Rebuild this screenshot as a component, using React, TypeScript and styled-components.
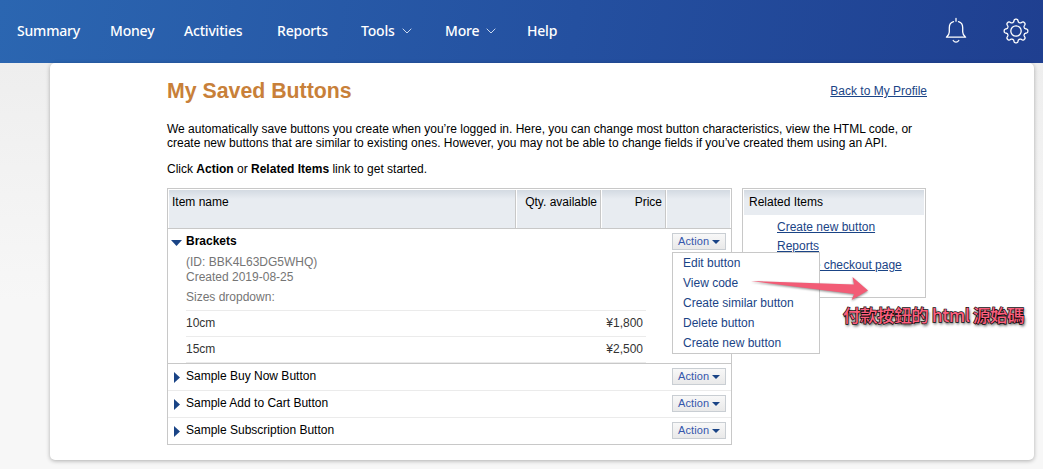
import React from "react";
import styled, { createGlobalStyle } from "styled-components";

const GlobalStyle = createGlobalStyle`
  * { box-sizing: border-box; }
  html { height: 100%; }
  body {
    margin: 0;
    height: 469px;
    overflow: hidden;
    background: linear-gradient(#eeeeee 63px, #f7f7f7 300px);
    font: 12px/14px "Liberation Sans", Arial, sans-serif;
    color: #000;
  }
  h1, p, ul { margin: 0; padding: 0; }
  ul { list-style: none; }
`;

const Header = styled.header`
  display: flex;
  align-items: center;
  justify-content: space-between;
  height: 63px;
  padding: 0 14px 2px 17px;
  background: linear-gradient(100deg, #2b66b1 0%, #2450a0 55%, #1f3f90 100%);
`;
const Nav = styled.nav`
  display: flex;
`;
const NavItem = styled.a<{ $slot: number }>`
  display: flex;
  align-items: center;
  width: ${(p) => p.$slot}px;
  color: #fff;
  font: 500 14px/20px "Noto Sans", sans-serif;
  letter-spacing: -0.2px;
  white-space: nowrap;
  svg { margin: 1px 0 0 7px; }
`;
const Tools = styled.div`
  display: flex;
  align-items: center;
  gap: 36px;
`;

const Panel = styled.main`
  width: 984px;
  height: 397px;
  margin-left: 50px;
  padding: 15px 107px 0 117px;
  background: #fff;
  border-radius: 5px;
  box-shadow: 0 1px 4px rgba(0, 0, 0, 0.3);
`;
const TitleRow = styled.div`
  display: flex;
  justify-content: space-between;
  height: 44px;
`;
const Title = styled.h1`
  color: #c88039;
  font-size: 21.3px;
  line-height: 26px;
`;
const Link = styled.a`
  color: #1a4486;
  text-decoration: underline;
  white-space: nowrap;
`;
const BackLink = styled(Link)`
  margin-top: 6px;
`;
const Intro = styled.p`
  margin-bottom: 12px;
  white-space: nowrap;
`;
const Columns = styled.div`
  display: flex;
  align-items: flex-start;
  gap: 10px;
`;

const Table = styled.section`
  width: 565px;
  border: 1px solid #c8c8c8;
`;
const HeadRow = styled.div`
  display: grid;
  grid-template-columns: 348px 85px 65px 65px;
  height: 40px;
  border-bottom: 1px solid #c8c8c8;
`;
const HeadCell = styled.div<{ $right?: boolean }>`
  padding: 5px 4px 0 3px;
  border: solid #fff;
  border-width: 1px 0 0 1px;
  text-align: ${(p) => (p.$right ? "right" : "left")};
  background: linear-gradient(#d3dae2, #e8ecf1 9px) padding-box;
  box-shadow: inset -1px 0 #c8c8c8;
  white-space: nowrap;
  &:last-child { border-right-width: 1px; box-shadow: none; }
`;
const Row = styled.div<{ $open?: boolean; $last?: boolean }>`
  position: relative;
  display: flex;
  justify-content: space-between;
  height: ${(p) => (p.$open ? 135 : p.$last ? 26 : 27)}px;
  padding: ${(p) => (p.$open ? "5px 5px 0" : "4px 5px 0")};
  border-bottom: ${(p) => (p.$last ? 0 : 1)}px solid ${(p) => (p.$open ? "#c8c8c8" : "#ebebeb")};
`;
const Name = styled.div<{ $bold?: boolean }>`
  display: flex;
  height: 14px;
  font-weight: ${(p) => (p.$bold ? 700 : 400)};
  margin-top: ${(p) => (p.$bold ? 0 : 1)}px;
`;
const Marker = styled.span<{ $down?: boolean }>`
  width: 13px;
  padding-top: ${(p) => (p.$down ? 6 : 3)}px;
  padding-left: ${(p) => (p.$down ? 0 : 1)}px;
  margin-left: ${(p) => (p.$down ? -2 : 0)}px;
  margin-right: ${(p) => (p.$down ? 2 : 0)}px;
  line-height: 0;
`;
const Meta = styled.div`
  margin: 7px 0 0 13px;
  width: 460px;
  color: #757575;
  line-height: 15px;
`;
const Sizes = styled.p`
  margin-top: 5px;
  height: 20px;
`;
const Option = styled.div`
  display: flex;
  justify-content: space-between;
  height: 26px;
  padding: 5px 3px 0 0;
  border-top: 1px solid #ebebeb;
  color: #333;
`;
const OptionEnd = styled.div`
  height: 1px;
  background: #ebebeb;
`;
const ActionButton = styled.button<{ $open?: boolean }>`
  display: flex;
  align-items: center;
  justify-content: space-between;
  flex: none;
  width: 54px;
  height: 17px;
  margin: ${(p) => (p.$open ? -1 : 0)}px 0 0;
  padding: 0 5px 0 5px;
  border: 1px solid #c9ced3;
  background: linear-gradient(#f8f8f8, #e9e9e9);
  color: #3557ac;
  font: 11px/13px "Liberation Sans", Arial, sans-serif;
  letter-spacing: 0.1px;
`;
const Menu = styled.ul`
  position: absolute;
  z-index: 2;
  top: 23px;
  left: 504px;
  width: 148px;
  height: 102px;
  border: 1px solid #c8c8c8;
  background: #fff;
  color: #1a4486;
`;
const MenuItem = styled.li`
  height: 20px;
  padding-left: 10px;
  line-height: 20px;
`;

const Related = styled.aside`
  width: 184px;
  height: 110px;
  padding: 1px;
  border: 1px solid #c8c8c8;
`;
const RelatedHead = styled.div`
  height: 25px;
  padding: 5px 5px 0;
  background: linear-gradient(#d3dae2, #e8ecf1 9px);
`;
const RelatedList = styled.ul`
  padding: 3px 0 0 33px;
  line-height: 19px;
`;

const Arrow = styled.svg`
  position: absolute;
  z-index: 3;
  left: 745px;
  top: 270px;
  filter: drop-shadow(0 1px 1px rgba(0, 0, 0, 0.45));
`;
const Note = styled.div`
  position: absolute;
  z-index: 3;
  left: 843px;
  top: 302px;
  color: #fb5f7d;
  font: 500 17.5px/25px "Noto Sans CJK TC", sans-serif;
  letter-spacing: -0.45px;
  white-space: nowrap;
  -webkit-text-stroke: 1.4px #111;
  paint-order: stroke fill;
  text-shadow: 1px 2px 3px rgba(0, 0, 0, 0.9);
`;

const Chevron = () => (
  <svg width="10" height="6" viewBox="0 0 10 6" fill="none" stroke="#cbd9ef">
    <path d="M.7.7 5 5 9.300.7" />
  </svg>
);

const Bell = () => (
  <svg width="22" height="27" viewBox="0 0 22 27" fill="none" stroke="#fff" strokeWidth="1.3" strokeLinecap="round" strokeLinejoin="round">
    <path d="M11 1.500v2.700M8.500 4.700C5.500 5.500 4.300 8 4.300 10.700V15c0 2.300-.9 3.600-2.900 5.200h19.200c-2-1.600-2.900-2.900-2.900-5.200v-4.300C17.700 8 16.500 5.500 13.500 4.700" />
    <path d="M8.200 23.500c1.500 2.200 4.100 2.200 5.600 0" />
  </svg>
);

const gearPath = () => {
  const pts: string[] = [];
  for (let i = 0; i <= 160; i++) {
    const a = (i / 160) * Math.PI * 2;
    const wave = Math.cos(a * 8);
    const r = 10.4 + 1.5 * Math.tanh(wave * 1.8);
    pts.push(`${(13 + r * Math.sin(a)).toFixed(2)} ${(13 - r * Math.cos(a)).toFixed(2)}`);
  }
  return `M${pts.join("L")}Z`;
};

const Gear = () => (
  <svg width="26" height="26" viewBox="0 0 26 26" fill="none" stroke="#fff" strokeWidth="1.3" strokeLinejoin="round">
    <path d={gearPath()} />
    <circle cx="13" cy="13" r="5.200" />
  </svg>
);

const Action = ({ open }: { open?: boolean }) => (
  <ActionButton $open={open}>
    Action
    <svg width="8" height="4" viewBox="0 0 8 4"><path d="M0 0h8L4 4Z" fill="#1a4486" /></svg>
  </ActionButton>
);

const navItems = [
  { label: "Summary", slot: 93 },
  { label: "Money", slot: 74 },
  { label: "Activities", slot: 93 },
  { label: "Reports", slot: 84 },
  { label: "Tools", slot: 84, menu: true },
  { label: "More", slot: 82, menu: true },
  { label: "Help", slot: 40 },
];
const samples = ["Sample Buy Now Button", "Sample Add to Cart Button", "Sample Subscription Button"];
const actions = ["Edit button", "View code", "Create similar button", "Delete button", "Create new button"];
const related = ["Create new button", "Reports", "Manage checkout page"];

export default function App() {
  return (
    <>
      <GlobalStyle />
      <Header>
        <Nav>
          {navItems.map((n) => (
            <NavItem key={n.label} $slot={n.slot}>
              {n.label}
              {n.menu && <Chevron />}
            </NavItem>
          ))}
        </Nav>
        <Tools>
          <Bell />
          <Gear />
        </Tools>
      </Header>
      <Panel>
        <TitleRow>
          <Title>My Saved Buttons</Title>
          <BackLink>Back to My Profile</BackLink>
        </TitleRow>
        <Intro>
          We automatically save buttons you create when you’re logged in. Here, you can change most button characteristics, view the HTML code, or
          <br />
          create new buttons that are similar to existing ones. However, you may not be able to change fields if you’ve created them using an API.
        </Intro>
        <Intro>
          Click <b>Action</b> or <b>Related Items</b> link to get started.
        </Intro>
        <Columns>
          <Table>
            <HeadRow>
              <HeadCell>Item name</HeadCell>
              <HeadCell $right>Qty. available</HeadCell>
              <HeadCell $right>Price</HeadCell>
              <HeadCell />
            </HeadRow>
            <Row $open>
              <div>
                <Name $bold>
                  <Marker $down>
                    <svg width="11" height="6" viewBox="0 0 11 6"><path d="M0 0h11L5.500 6Z" fill="#1a4486" /></svg>
                  </Marker>
                  Brackets
                </Name>
                <Meta>
                  <p>(ID: BBK4L63DG5WHQ)</p>
                  <p>Created 2019-08-25</p>
                  <Sizes>Sizes dropdown:</Sizes>
                  <Option><span>10cm</span><span>¥1,800</span></Option>
                  <Option><span>15cm</span><span>¥2,500</span></Option>
                  <OptionEnd />
                </Meta>
              </div>
              <Action open />
              <Menu>
                {actions.map((a) => <MenuItem key={a}>{a}</MenuItem>)}
              </Menu>
            </Row>
            {samples.map((s, i) => (
              <Row key={s} $last={i === samples.length - 1}>
                <Name>
                  <Marker>
                    <svg width="6" height="11" viewBox="0 0 6 11"><path d="M0 0v11L6 5.500Z" fill="#1a4486" /></svg>
                  </Marker>
                  {s}
                </Name>
                <Action />
              </Row>
            ))}
          </Table>
          <Related>
            <RelatedHead>Related Items</RelatedHead>
            <RelatedList>
              {related.map((r) => <li key={r}><Link>{r}</Link></li>)}
            </RelatedList>
          </Related>
        </Columns>
      </Panel>
      <Arrow width="130" height="36" viewBox="745 270 130 36">
        <path d="M751 281 854 284.500 852.500 277 868 290.500 851.700 300 854 294Z" fill="#f25c76" />
      </Arrow>
      <Note>付款按鈕的 html 源始碼</Note>
    </>
  );
}
